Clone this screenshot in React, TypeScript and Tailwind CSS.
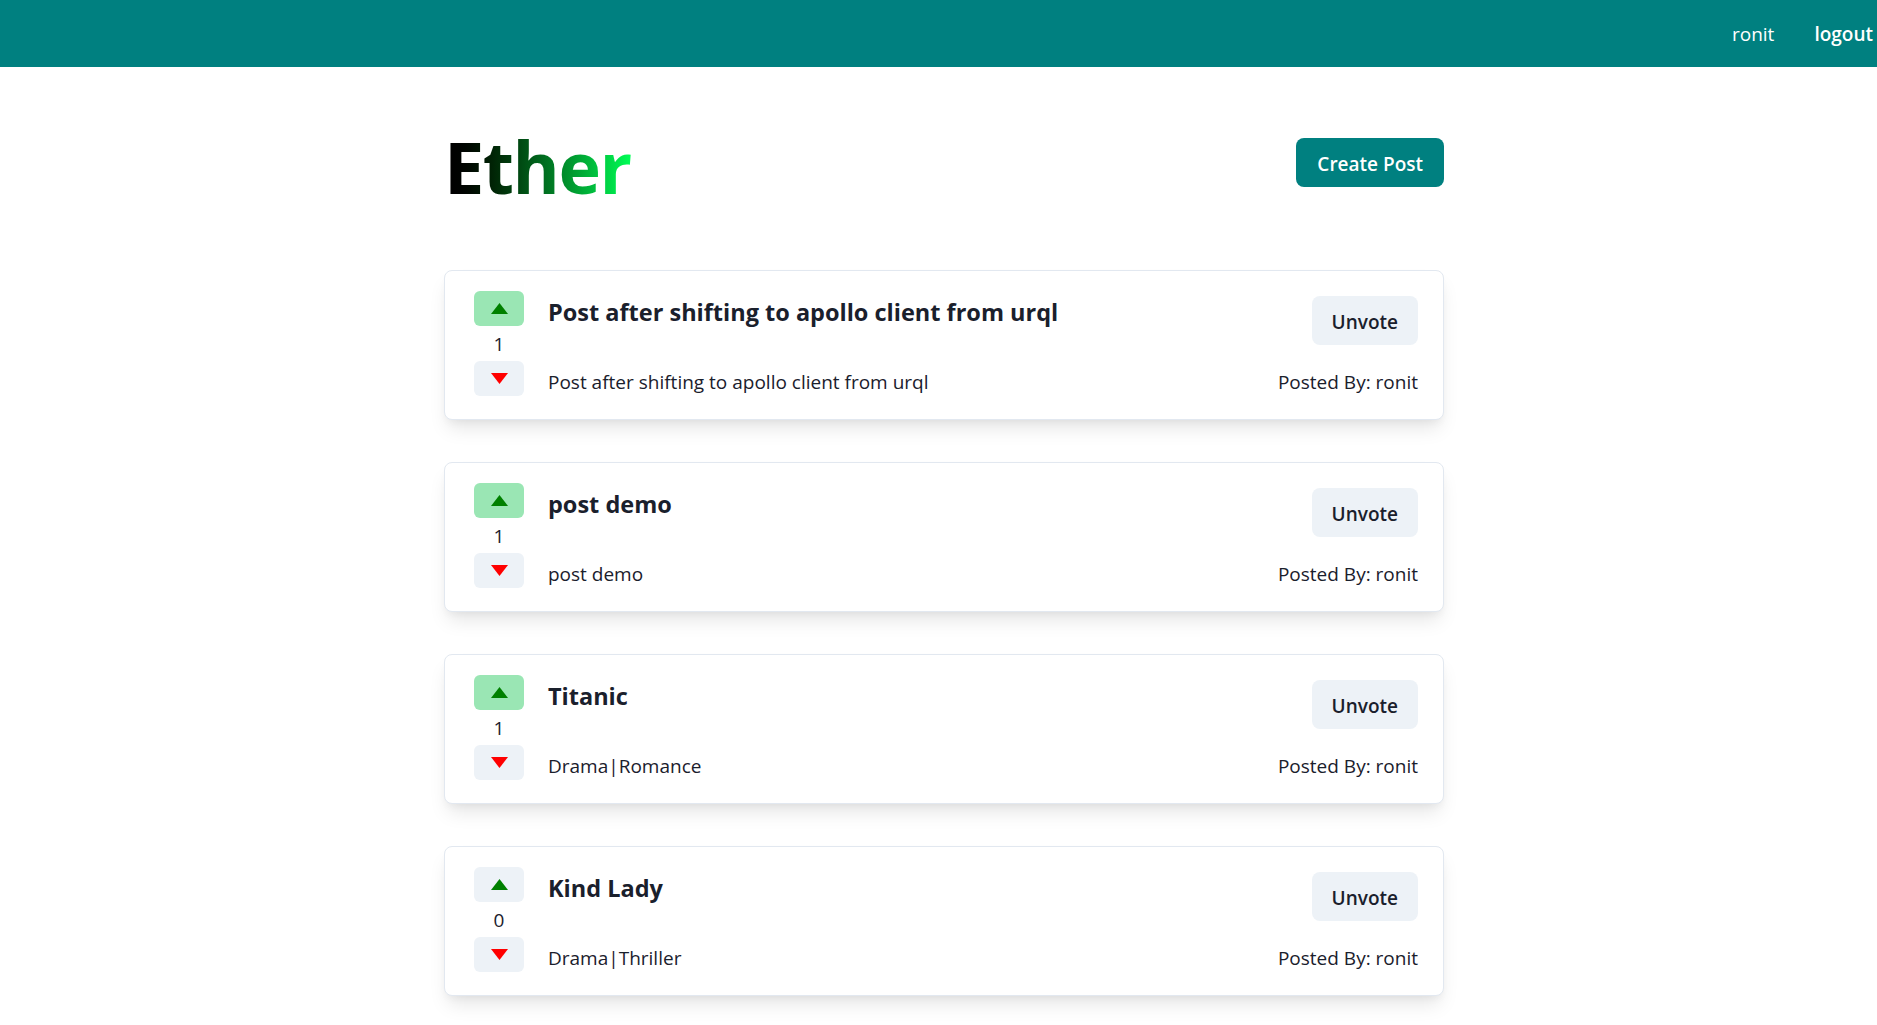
import React from 'react';

type Post = { id: number; title: string; text: string; points: number; voted: boolean; creator: string };

const posts: Post[] = [
  { id: 1, title: 'Post after shifting to apollo client from urql', text: 'Post after shifting to apollo client from urql', points: 1, voted: true, creator: 'ronit' },
  { id: 2, title: 'post demo', text: 'post demo', points: 1, voted: true, creator: 'ronit' },
  { id: 3, title: 'Titanic', text: 'Drama|Romance', points: 1, voted: true, creator: 'ronit' },
  { id: 4, title: 'Kind Lady', text: 'Drama|Thriller', points: 0, voted: false, creator: 'ronit' },
];

function TriangleUp() {
  return (
    <svg width="17" height="11" viewBox="0 0 17 11">
      <polygon points="8.5,0 17,11 0,11" fill="#008000" />
    </svg>
  );
}

function TriangleDown() {
  return (
    <svg width="17" height="11" viewBox="0 0 17 11">
      <polygon points="0,0 17,0 8.5,11" fill="#ff0000" />
    </svg>
  );
}

function PostCard({ post }: { post: Post }) {
  return (
    <div className="flex h-[150px] rounded-lg border border-[#e2e8f0] bg-white pl-[29px] pr-[25px] pt-[20px] shadow-[0_12px_19px_-4px_rgba(0,0,0,0.1),0_5px_8px_-3px_rgba(0,0,0,0.05)]">
      <div className="flex w-[50px] flex-col items-center">
        <button className={`flex h-[35px] w-[50px] items-center justify-center rounded-md ${post.voted ? 'bg-[#9ae6b4]' : 'bg-[#edf2f7]'}`}>
          <TriangleUp />
        </button>
        <div className="flex h-[35px] items-center justify-center pt-[1px] text-[19px] leading-[30px] text-[#1a202c]">{post.points}</div>
        <button className="flex h-[35px] w-[50px] items-center justify-center rounded-md bg-[#edf2f7]">
          <TriangleDown />
        </button>
      </div>
      <div className="ml-[24px] flex flex-1 flex-col">
        <div className="flex items-start justify-between">
          <h2 className="mt-[6px] text-[23.5px] font-bold leading-[30px] text-[#1a202c]">{post.title}</h2>
          <button className="mt-[5px] h-[49px] rounded-lg bg-[#edf2f7] px-[20px] pt-[3px] text-[19px] font-semibold text-[#1a202c]">Unvote</button>
        </div>
        <div className="mt-[22px] flex justify-between text-[19px] leading-[30px] text-[#1a202c]">
          <p>{post.text}</p>
          <p>Posted By: {post.creator}</p>
        </div>
      </div>
    </div>
  );
}

export default function App() {
  return (
    <div className="min-h-screen bg-white font-['Open_Sans',sans-serif]">
      <nav className="flex h-[67px] items-center justify-end bg-[#008080] pr-[4px] pt-[2px] text-[19px] text-white">
        <span>ronit</span>
        <button className="ml-[40px] font-semibold">logout</button>
      </nav>
      <div className="mx-auto w-[1011px] pl-[11px]">
        <div className="flex items-start justify-between">
          <h1 className="mt-[55px] inline-block bg-gradient-to-r from-[#000000] to-[#00ff55] bg-clip-text text-[72px] font-bold leading-[88px] tracking-[-1.5px] text-transparent">
            Ether
          </h1>
          <button className="mt-[71px] h-[49px] rounded-lg bg-[#008080] px-[21px] pt-[3px] text-[19px] font-semibold text-white">Create Post</button>
        </div>
        <div className="mt-[60px] flex flex-col gap-[42px] pb-[40px]">
          {posts.map((p) => (
            <PostCard key={p.id} post={p} />
          ))}
        </div>
      </div>
    </div>
  );
}
